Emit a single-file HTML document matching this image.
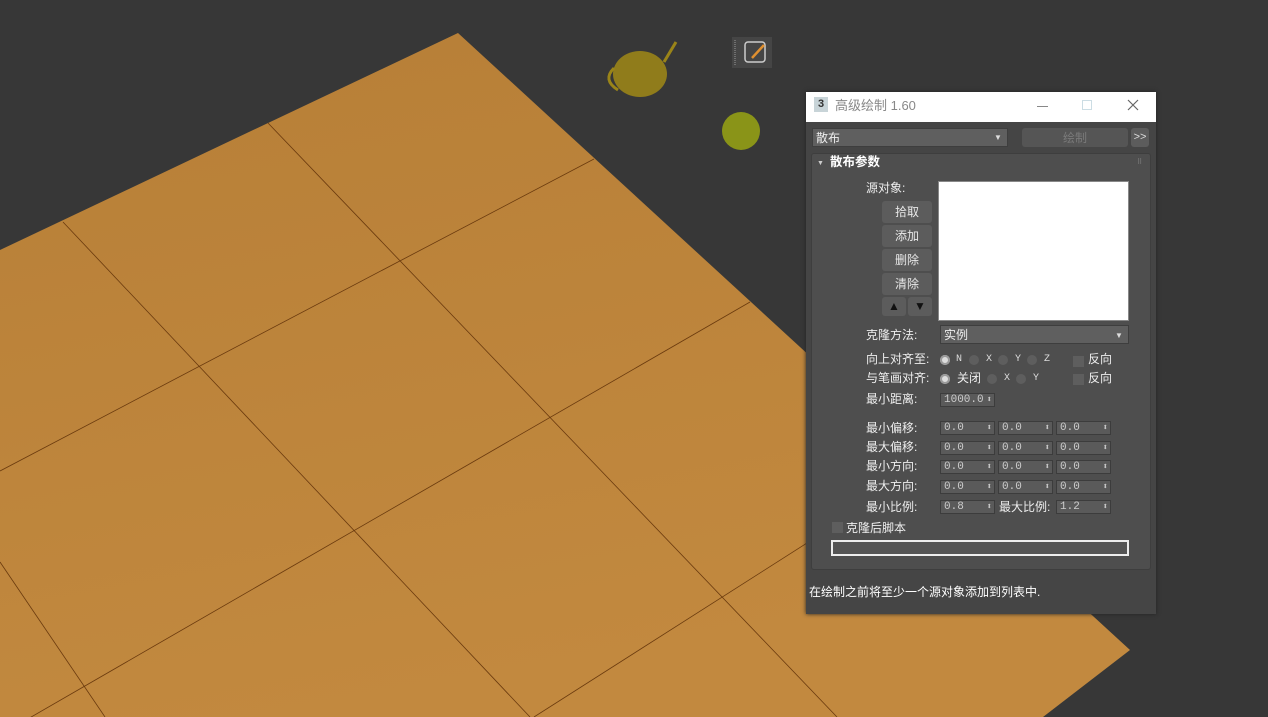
<!DOCTYPE html>
<html><head><meta charset="utf-8"><style>
*{margin:0;padding:0;box-sizing:border-box}
body{width:1268px;height:717px;overflow:hidden;background:#373737;position:relative;font-family:"Liberation Sans","Noto Sans CJK SC",sans-serif;font-size:12px;color:#ddd}
.a{position:absolute}
.t{position:absolute;white-space:nowrap;line-height:14px}
.btn{position:absolute;background:#5c5c5c;border-radius:3px;color:#e8e8e8;text-align:center;line-height:22px;font-size:12px}
.sp{position:absolute;height:14px;width:55px;background:#5a5a5a;border:1px solid #3c3c3c;color:#ccc;font-family:"Liberation Mono",monospace;font-size:11px;line-height:12px;padding-left:3px}
.sp:after{content:"⬍";position:absolute;right:2px;top:0;font-size:9px;color:#ccc}
.rd{position:absolute;width:10px;height:10px;border-radius:50%;background:#5e5e5e}
.rd.on{background:#ddd;box-shadow:inset 0 0 0 2px #9a9a9a}
.cb{position:absolute;width:11px;height:11px;background:#5e5e5e}
.lt{position:absolute;font-family:"Liberation Mono",monospace;font-size:10px;color:#ddd;line-height:12px}
</style></head><body>
<svg class="a" style="left:0;top:0" width="1268" height="717">
<defs><linearGradient id="g" x1="0" y1="0" x2="0.3" y2="1"><stop offset="0" stop-color="#b77f37"/><stop offset="1" stop-color="#c2893f"/></linearGradient></defs>
<polygon points="458,33 1130,650 1043,717 0,717 0,250" fill="url(#g)"/>
<g stroke="#6a3a0e" stroke-width="0.8" fill="none">
<line x1="268" y1="123" x2="837" y2="717"/>
<line x1="63" y1="222" x2="530" y2="717"/>
<line x1="0" y1="562" x2="105" y2="717"/>
<line x1="594" y1="159" x2="0" y2="471"/>
<line x1="750" y1="302" x2="0" y2="735"/>
<line x1="1000" y1="420" x2="534" y2="717"/>
</g>
<ellipse cx="640" cy="74" rx="27" ry="23" fill="#9a8418" opacity="0.9"/>
<path d="M614 68 q-12 12 4 22" stroke="#9a8418" stroke-width="3" fill="none"/>
<path d="M664 62 l12 -20" stroke="#9a8418" stroke-width="3"/>
<circle cx="741" cy="131" r="19" fill="#8a9418"/>
<rect x="732" y="37" width="40" height="31" fill="#454545"/>
<rect x="745" y="42" width="20" height="20" rx="3" fill="none" stroke="#ccc" stroke-width="1.5"/>
<path d="M752 58 l12 -13" stroke="#e09030" stroke-width="2.5"/>
<line x1="735" y1="40" x2="735" y2="65" stroke="#999" stroke-dasharray="1,1"/>
</svg>
<div class="a" style="left:806px;top:92px;width:350px;height:522px;background:#454545;box-shadow:0 0 4px #222"></div>
<div class="a" style="left:806px;top:92px;width:350px;height:30px;background:#fff"></div>
<div class="a" style="left:814px;top:97px;width:14px;height:15px;background:#c8d4d8;color:#333;font-size:11px;font-weight:bold;text-align:center;line-height:15px">3</div>
<div class="t" style="left:835px;top:99px;color:#888;font-size:13px">高级绘制 1.60</div>
<div class="a" style="left:1037px;top:106px;width:11px;height:1px;background:#888"></div>
<div class="a" style="left:1082px;top:100px;width:10px;height:10px;border:1px solid #ccdde4"></div>
<svg class="a" style="left:1127px;top:99px" width="12" height="12"><path d="M1 1L11 11M11 1L1 11" stroke="#666" stroke-width="1.2"/></svg>
<div class="a" style="left:812px;top:128px;width:196px;height:19px;background:#5f5f5f;border:1px solid #3e3e3e"></div>
<div class="t" style="left:816px;top:131px;color:#eee">散布</div>
<div class="t" style="left:994px;top:131px;font-size:8px;color:#ddd">▼</div>
<div class="a" style="left:1022px;top:128px;width:106px;height:19px;background:#555;border-radius:3px"></div>
<div class="t" style="left:1063px;top:131px;color:#7a7a7a">绘制</div>
<div class="a" style="left:1131px;top:128px;width:18px;height:19px;background:#5c5c5c;border-radius:3px;color:#ddd;font-size:11px;text-align:center;line-height:19px">&gt;&gt;</div>
<div class="a" style="left:811px;top:153px;width:340px;height:417px;background:#4e4e4e;border:1px solid #3e3e3e;border-radius:3px"></div>
<div class="t" style="left:817px;top:157px;font-size:7px;color:#ccc">▼</div>
<div class="t" style="left:830px;top:155px;color:#fff;font-weight:bold;font-size:12.5px">散布参数</div>
<div class="t" style="left:1137px;top:156px;font-size:7px;color:#888">⠿</div>
<div class="t" style="left:866px;top:181px;color:#eee">源对象:</div>
<div class="a" style="left:938px;top:181px;width:191px;height:140px;background:#fff;border:1px solid #888"></div>
<div class="btn" style="left:882px;top:201px;width:50px">拾取</div>
<div class="btn" style="left:882px;top:225px;width:50px">添加</div>
<div class="btn" style="left:882px;top:249px;width:50px">删除</div>
<div class="btn" style="left:882px;top:273px;width:50px">清除</div>
<div class="btn" style="left:882px;top:297px;width:24px;height:19px;line-height:19px;color:#111;font-size:12px">▲</div>
<div class="btn" style="left:908px;top:297px;width:24px;height:19px;line-height:19px;color:#111;font-size:12px">▼</div>
<div class="t" style="left:866px;top:328px;color:#eee">克隆方法:</div>
<div class="a" style="left:940px;top:325px;width:189px;height:19px;background:#5f5f5f;border:1px solid #3e3e3e"></div>
<div class="t" style="left:944px;top:328px;color:#eee">实例</div>
<div class="t" style="left:1115px;top:329px;font-size:8px;color:#ddd">▼</div>
<div class="t" style="left:866px;top:352px;color:#eee">向上对齐至:</div>
<div class="rd on" style="left:940px;top:355px"></div><div class="lt" style="left:956px;top:354px">N</div>
<div class="rd" style="left:969px;top:355px"></div><div class="lt" style="left:986px;top:354px">X</div>
<div class="rd" style="left:998px;top:355px"></div><div class="lt" style="left:1015px;top:354px">Y</div>
<div class="rd" style="left:1027px;top:355px"></div><div class="lt" style="left:1044px;top:354px">Z</div>
<div class="cb" style="left:1073px;top:356px"></div><div class="t" style="left:1088px;top:352px;color:#eee">反向</div>
<div class="t" style="left:866px;top:371px;color:#eee">与笔画对齐:</div>
<div class="rd on" style="left:940px;top:374px"></div><div class="t" style="left:957px;top:371px;color:#eee">关闭</div>
<div class="rd" style="left:987px;top:374px"></div><div class="lt" style="left:1004px;top:373px">X</div>
<div class="rd" style="left:1016px;top:374px"></div><div class="lt" style="left:1033px;top:373px">Y</div>
<div class="cb" style="left:1073px;top:374px"></div><div class="t" style="left:1088px;top:371px;color:#eee">反向</div>
<div class="t" style="left:866px;top:392px;color:#eee">最小距离:</div>
<div class="sp" style="left:940px;top:393px">1000.0</div>
<div class="t" style="left:866px;top:421px;color:#eee">最小偏移:</div>
<div class="sp" style="left:940px;top:421px">0.0</div><div class="sp" style="left:998px;top:421px">0.0</div><div class="sp" style="left:1056px;top:421px">0.0</div>
<div class="t" style="left:866px;top:440px;color:#eee">最大偏移:</div>
<div class="sp" style="left:940px;top:441px">0.0</div><div class="sp" style="left:998px;top:441px">0.0</div><div class="sp" style="left:1056px;top:441px">0.0</div>
<div class="t" style="left:866px;top:459px;color:#eee">最小方向:</div>
<div class="sp" style="left:940px;top:460px">0.0</div><div class="sp" style="left:998px;top:460px">0.0</div><div class="sp" style="left:1056px;top:460px">0.0</div>
<div class="t" style="left:866px;top:479px;color:#eee">最大方向:</div>
<div class="sp" style="left:940px;top:480px">0.0</div><div class="sp" style="left:998px;top:480px">0.0</div><div class="sp" style="left:1056px;top:480px">0.0</div>
<div class="t" style="left:866px;top:500px;color:#eee">最小比例:</div>
<div class="sp" style="left:940px;top:500px">0.8</div>
<div class="t" style="left:999px;top:500px;color:#eee">最大比例:</div>
<div class="sp" style="left:1056px;top:500px">1.2</div>
<div class="cb" style="left:832px;top:522px"></div>
<div class="t" style="left:846px;top:521px;color:#eee">克隆后脚本</div>
<div class="a" style="left:831px;top:540px;width:298px;height:16px;background:#555;border:2px solid #eee"></div>
<div class="t" style="left:809px;top:585px;color:#fff">在绘制之前将至少一个源对象添加到列表中.</div>
</body></html>
